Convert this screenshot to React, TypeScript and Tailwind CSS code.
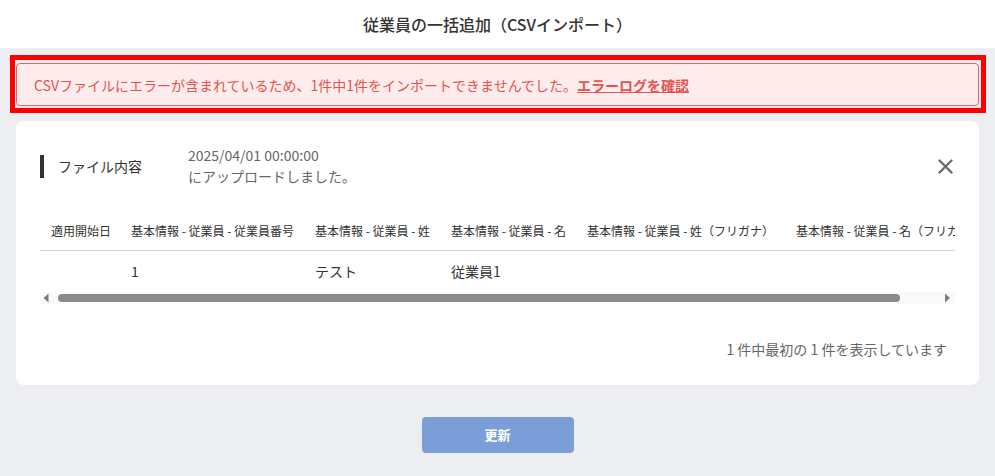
import React from "react";

const headers = [
  { label: "適用開始日", w: "w-[80px]" },
  { label: "基本情報 - 従業員 - 従業員番号", w: "w-[184px]" },
  { label: "基本情報 - 従業員 - 姓", w: "w-[136px]" },
  { label: "基本情報 - 従業員 - 名", w: "w-[136px]" },
  { label: "基本情報 - 従業員 - 姓（フリガナ）", w: "w-[209px]" },
  { label: "基本情報 - 従業員 - 名（フリガナ）", w: "w-[240px]" },
];

const row = ["", "1", "テスト", "従業員1", "", ""];

export default function App() {
  return (
    <div className="w-[995px] h-[476px] overflow-hidden bg-[#edeef2] font-['Noto_Sans_CJK_JP','Noto_Sans',sans-serif] text-[#333]">
      <header className="h-12 bg-white flex items-center justify-center text-base font-medium text-[#333]">
        従業員の一括追加（CSVインポート）
      </header>

      <div className="px-4 pt-[15px]">
        <div className="relative">
          <div className="absolute -left-[6px] -right-[7px] -top-[8px] -bottom-[7px] border-[5px] border-[#ff0000] pointer-events-none" />
          <div className="h-[43px] border border-[#ec5f5f] bg-[#feecec] rounded flex items-center px-[17px] text-sm text-[#e5534f]">
            <span>CSVファイルにエラーが含まれているため、1件中1件をインポートできませんでした。</span>
            <a className="font-bold underline cursor-pointer">エラーログを確認</a>
          </div>
        </div>

        <div className="mt-[15px] bg-white rounded-lg px-6 pt-6 pb-[25px]">
          <div className="flex items-center">
            <div className="w-[148px] flex items-center">
              <div className="w-1 h-[23px] bg-[#333]" />
              <span className="ml-[14px] text-sm text-[#333]">ファイル内容</span>
            </div>
            <div className="text-sm leading-[21px] text-[#666]">
              <div>2025/04/01 00:00:00</div>
              <div>にアップロードしました。</div>
            </div>
            <button className="ml-auto mr-[2px] text-[#666]">
              <svg width="15" height="15" viewBox="0 0 15 15" fill="none">
                <path d="M1.5 1.5 L13.5 13.5 M13.5 1.5 L1.5 13.5" stroke="#6b6b6b" strokeWidth="2.4" strokeLinecap="round" />
              </svg>
            </button>
          </div>

          <div className="mt-[25px] overflow-hidden">
            <table className="table-fixed border-collapse w-[985px]">
              <thead>
                <tr className="border-b border-[#d4d4d4]">
                  {headers.map((h) => (
                    <th
                      key={h.label}
                      className={`${h.w} px-[11px] py-[10px] text-left text-xs leading-[18px] font-normal whitespace-nowrap text-[#333]`}
                    >
                      {h.label}
                    </th>
                  ))}
                </tr>
              </thead>
              <tbody>
                <tr>
                  {row.map((c, i) => (
                    <td key={i} className="px-[11px] py-[10px] text-sm leading-[21px] whitespace-nowrap text-[#333]">
                      {c}
                    </td>
                  ))}
                </tr>
              </tbody>
            </table>
          </div>

          <div className="h-3 bg-[#f9f9f9] flex items-center">
            <svg width="18" height="12" viewBox="0 0 18 12" className="shrink-0">
              <path d="M3.5 6 L8.5 1.5 L8.5 10.5 Z" fill="#7c7c7c" />
            </svg>
            <div className="h-2 w-[842px] rounded-full bg-[#8b8b8b]" />
            <div className="flex-1" />
            <svg width="12" height="12" viewBox="0 0 12 12" className="shrink-0 mr-[1px]">
              <path d="M3 1.5 L8 6 L3 10.5 Z" fill="#7c7c7c" />
            </svg>
          </div>

          <div className="mt-[35px] pr-2 text-right text-sm leading-[21px] text-[#666]">
            1 件中最初の 1 件を表示しています
          </div>
        </div>
      </div>

      <div className="mt-[32px] flex justify-center">
        <button className="w-[152px] h-9 rounded bg-[#7b9ed8] text-white text-[13px] font-bold">
          更新
        </button>
      </div>
    </div>
  );
}
